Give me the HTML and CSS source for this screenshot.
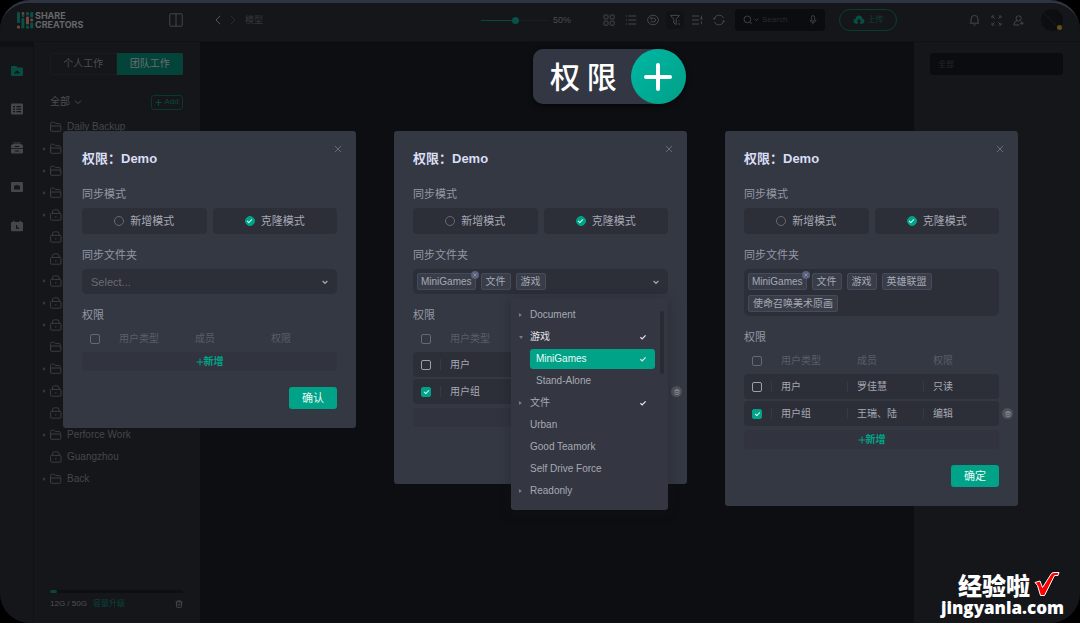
FILE: index.html
```html
<!DOCTYPE html>
<html lang="zh-CN">
<head>
<meta charset="utf-8">
<meta name="viewport" content="width=device-width, initial-scale=1">
<title>Share Creators</title>
<link rel="stylesheet" href="styles.css">
</head>
<body>
<svg class="sprite" aria-hidden="true">
  <symbol id="folder" viewBox="0 0 12 12"><path d="M.6 9.8V2.2q0-1 1-1h2.6l1.2 1.4h4q1 0 1 1v1M.6 5h10.2v4.3q0 1-1 1H1.6q-1 0-1-1z"/></symbol>
  <symbol id="lock" viewBox="0 0 12 12"><rect x=".6" y="4.4" width="10.4" height="6.8" rx="1"/><path d="M2.4 4.4V3Q2.4.8 4.6.8h2.4q2.2 0 2.2 2.2v1.4M5.8 7v1.6"/></symbol>
  <symbol id="close" viewBox="0 0 8 8"><path d="M.8.8l6.4 6.4M7.2.8L.8 7.2"/></symbol>
  <symbol id="down" viewBox="0 0 8 8"><path d="M1 2.6l3 3 3-3"/></symbol>
  <symbol id="caret" viewBox="0 0 8 8"><path stroke-width="1.3" d="M1.600 3l2.400 2.300L6.400 3"/></symbol>
  <symbol id="tick" viewBox="0 0 8 8"><path stroke-width="1.3" d="M1.400 4.200l1.800 1.700 3.400-3.500"/></symbol>
  <symbol id="trash" viewBox="0 0 10 10"><path d="M.8 2.4h8.4M3.2 2.2V1h3.6v1.2M1.8 2.6v5.4q0 1.2 1.2 1.2h4q1.2 0 1.2-1.2V2.6M4 4.6v2.4M6 4.6v2.4"/></symbol>
</svg>

<div class="app">
  <header class="topbar">
    <div class="brand">
      <div class="logo">
        <svg width="17" height="17" viewBox="0 0 17 17" aria-hidden="true">
          <g class="logo-green"><rect x="0" y="0" width="3" height="11" rx="1"/><rect x="4.4" y="6" width="3" height="10.5" rx="1"/><circle cx="6" cy="3.8" r="1.5"/><rect x="9" y="0" width="3" height="3.4" rx="1"/><rect x="9" y="13.4" width="3" height="3.4" rx="1"/><rect x="13.2" y="0" width="3" height="5.5" rx="1"/><rect x="13.2" y="10.5" width="3" height="6" rx="1"/></g>
          <g class="logo-red"><circle cx="1.5" cy="15" r="1.6"/><circle cx="6" cy="1.4" r="1.4"/><rect x="9" y="4.4" width="3" height="8.2" rx="1"/><circle cx="14.7" cy="8" r="1.6"/></g>
        </svg>
        <span class="logo-text">SHARE<br>CREATORS</span>
      </div>
      <button class="icon-btn" aria-label="布局"><svg width="14" height="14" viewBox="0 0 14 14"><rect x=".8" y=".8" width="12.4" height="12.4" rx="1.2"/><path d="M7 1v12"/></svg></button>
    </div>
    <nav class="crumbs" aria-label="路径">
      <button class="icon-btn" aria-label="后退"><svg width="6" height="10" viewBox="0 0 6 10"><path d="M5.2.8L1 5l4.2 4.2"/></svg></button>
      <button class="icon-btn faint" aria-label="前进"><svg width="6" height="10" viewBox="0 0 6 10"><path d="M.8.8L5 5 .8 9.2"/></svg></button>
      <span class="crumb">模型</span>
    </nav>
    <div class="tools">
      <label class="zoom"><input type="range" min="0" max="100" value="50" aria-label="缩放"><span>50%</span></label>
      <div class="tool-icons">
        <button class="icon-btn" aria-label="网格"><svg width="12" height="12" viewBox="0 0 12 12"><rect x="1" y="1" width="4" height="4" rx=".6"/><rect x="7.2" y="1" width="4" height="4" rx=".6"/><rect x="1" y="7.2" width="4" height="4" rx=".6"/><rect x="7.2" y="7.2" width="4" height="4" rx=".6"/></svg></button>
        <button class="icon-btn" aria-label="列表"><svg width="12" height="12" viewBox="0 0 12 12"><path d="M.8 2h1.2M.8 6h1.2M.8 10h1.2M3.4 2h8M3.4 6h8M3.4 10h8"/></svg></button>
        <button class="icon-btn" aria-label="撤销"><svg width="12" height="12" viewBox="0 0 12 12"><ellipse cx="6" cy="6" rx="5.4" ry="4.8"/><path d="M4.600 2.800L3.400 4.200l1.200 1.400M3.600 4.200h3.200q1.800 0 1.800 1.800T6.800 7.800H3.600"/></svg></button>
        <button class="icon-btn active" aria-label="筛选"><svg width="12" height="12" viewBox="0 0 12 12"><path d="M1.4 1.4h9L7.2 5.2v5.4L4.8 9V5.2zM10 6.4v1M10 9v2"/></svg></button>
        <button class="icon-btn" aria-label="排序"><svg width="12" height="12" viewBox="0 0 12 12"><path d="M1 2h7M1 6h7M1 10h7M10.4 1.6v3.8M9.6 4l.8 1.4.8-1.4M10.4 7.4v2.8"/></svg></button>
        <button class="icon-btn" aria-label="刷新"><svg width="12" height="12" viewBox="0 0 12 12"><path d="M1.2 5A5 5 0 0 1 10.6 4M10.8 7A5 5 0 0 1 1.4 8M.4 4l.8 1.4L2.6 4.4M11.6 8l-.8-1.4-1.4 1"/></svg></button>
      </div>
      <label class="search">
        <svg width="17" height="10" viewBox="0 0 17 10"><circle cx="4.4" cy="4.4" r="3.4"/><path d="M6.8 7l1.8 2M11.4 3.6l2 2 2-2"/></svg>
        <input type="text" placeholder="Search" aria-label="Search">
        <svg width="8" height="10" viewBox="0 0 8 10"><rect x="2.4" y=".6" width="3.2" height="5.2" rx="1.6"/><path d="M1 4.6q0 2.8 3 2.8t3-2.8M4 7.4v2"/></svg>
      </label>
      <button class="upload"><svg width="12" height="10" viewBox="0 0 12 10"><path d="M3 8.8Q.4 8.6.4 6.2.4 4 2.6 3.8 3.2.6 6 .6t3.4 3.2q2.2.2 2.2 2.4 0 2.4-2.6 2.6H7V6.4h1.4L6 3.8 3.6 6.4H5v2.4z"/></svg>上传</button>
    </div>
    <div class="account">
      <button class="icon-btn" aria-label="通知"><svg width="11" height="12" viewBox="0 0 11 12"><path d="M2 9V5Q2 1.4 5.5 1.4T9 5v4M.8 9.2h9.4M4.4 11h2.2"/></svg></button>
      <button class="icon-btn" aria-label="全屏"><svg width="11" height="11" viewBox="0 0 11 11"><path d="M1 3.2V1h2.2M7.8 1H10v2.2M10 7.8V10H7.8M3.2 10H1V7.8M2 2l1.6 1.6M9 2L7.4 3.6M9 9L7.4 7.4M2 9l1.6-1.6"/></svg></button>
      <button class="icon-btn" aria-label="用户"><svg width="11" height="11" viewBox="0 0 11 11"><circle cx="5.600" cy="3.4" r="2.6"/><path d="M4 5.6Q1 6.600.8 10h5.600M8.800 6.400v3.600M7 8.2h3.600"/></svg></button>
      <span class="avatar"><svg width="22" height="22" viewBox="0 0 22 22"><path d="M3 4l14 14"/></svg><i class="avatar-dot"></i></span>
    </div>
  </header>

  <div class="body">
    <nav class="rail" aria-label="主导航">
      <a href="#" class="current" aria-label="资源"><svg width="12" height="10" viewBox="0 0 12 10"><path fill-rule="evenodd" d="M1.2 0h4L6.6 1.4H11q1 0 1 1v6.4Q12 10 10.8 10H1.2Q0 10 0 8.8V1.2Q0 0 1.2 0zM3 7.4h5.6q.6-1.6-1-2-1-1.600-2.600-.4-.4 1-1.400 1z"/></svg></a>
      <a href="#" aria-label="列表"><svg width="12" height="12" viewBox="0 0 12 12"><path fill-rule="evenodd" d="M1 .5h10q1 0 1 1v9q0 1-1 1H1q-1 0-1-1v-9q0-1 1-1zM2 3v1.200h2V3zM5.400 3v1.200H10V3zM2 5.500v1.200h2V5.500zM5.400 5.500v1.200H10V5.500zM2 8v1.200h2V8zM5.400 8v1.200H10V8z"/></svg></a>
      <a href="#" aria-label="归档"><svg width="12" height="12" viewBox="0 0 12 12"><path fill-rule="evenodd" d="M2.400.4h7.200v1H2.400zM1.600 2h8.800L12 3.600v2.600H0V3.600zM4 4v1h4V4zM0 7h12v3.600q0 .8-.8.8H.8q-.8 0-.8-.8zM4 8.600v1h4v-1z"/></svg></a>
      <a href="#" aria-label="团队"><svg width="12" height="12" viewBox="0 0 12 12"><path fill-rule="evenodd" d="M1 1h10q1 0 1 1v8q0 1-1 1H1q-1 0-1-1V2q0-1 1-1zM3 8.400h6V5.800L7.800 4 7 4.800 6 3.400 5 4.800 4.200 4 3 5.800z"/></svg></a>
      <a href="#" aria-label="日程"><svg width="12" height="12" viewBox="0 0 12 12"><path fill-rule="evenodd" d="M2 .8h1.600V2h4.800V.8H10V2h1q1 0 1 1v7.200q0 1-1 1H1q-1 0-1-1V3q0-1 1-1h1zM5 5v3.800h3.200V7.600H6.200V5z"/></svg></a>
    </nav>

    <aside class="sidebar">
      <div class="tabs"><button>个人工作</button><button class="on">团队工作</button></div>
      <div class="side-head">
        <button class="filter">全部 <svg class="line" width="8" height="8"><use href="#down"/></svg></button>
        <button class="add"><svg class="line" width="7" height="7" viewBox="0 0 7 7"><path d="M3.500.4v6.200M.4 3.500h6.200"/></svg>Add</button>
      </div>
      <ul class="tree">
        <li><svg><use href="#folder"/></svg>Daily Backup</li>
        <li class="parent"><svg><use href="#folder"/></svg></li>
        <li class="parent"><svg><use href="#folder"/></svg></li>
        <li class="parent"><svg><use href="#folder"/></svg></li>
        <li class="parent"><svg><use href="#lock"/></svg></li>
        <li><svg><use href="#lock"/></svg></li>
        <li><svg><use href="#lock"/></svg></li>
        <li class="parent"><svg><use href="#lock"/></svg></li>
        <li class="parent"><svg><use href="#lock"/></svg></li>
        <li class="parent"><svg><use href="#lock"/></svg></li>
        <li><svg><use href="#folder"/></svg></li>
        <li class="parent"><svg><use href="#folder"/></svg></li>
        <li class="parent"><svg><use href="#lock"/></svg></li>
        <li><svg><use href="#lock"/></svg></li>
        <li class="parent"><svg><use href="#folder"/></svg>Perforce Work</li>
        <li><svg><use href="#lock"/></svg>Guangzhou</li>
        <li class="parent"><svg><use href="#folder"/></svg>Back</li>
      </ul>
      <div class="storage">
        <div class="bar"><div class="bar-fill"></div></div>
        <div class="storage-row"><span>12G / 50G</span><a href="#">容量升级</a><button class="icon-btn" aria-label="回收站"><svg width="8" height="8"><use href="#trash"/></svg></button></div>
      </div>
    </aside>

    <main class="stage"></main>

    <aside class="details"><input type="text" placeholder="全部" aria-label="全部"></aside>
  </div>

  <div class="badge"><span>权 限</span><i><svg width="28" height="28" viewBox="0 0 28 28"><path d="M14 2v24M2 14h24"/></svg></i></div>

  <div class="dialogs">
    <section class="dialog" role="dialog" aria-labelledby="t1">
      <button class="close" aria-label="关闭"><svg class="line" width="8" height="8"><use href="#close"/></svg></button>
      <h2 id="t1">权限：Demo</h2>
      <h3>同步模式</h3>
      <div class="modes">
        <label><input type="radio" name="m1">新增模式</label>
        <label><input type="radio" name="m1" checked>克隆模式</label>
      </div>
      <h3>同步文件夹</h3>
      <div class="field">
        <select aria-label="同步文件夹"><option>Select...</option></select>
        <svg class="line caret" width="8" height="8"><use href="#caret"/></svg>
      </div>
      <h3>权限</h3>
      <table class="empty">
        <thead><tr><th><input type="checkbox" aria-label="全选"></th><th>用户类型</th><th>成员</th><th>权限</th></tr></thead>
      </table>
      <button class="add-row"><svg class="line" width="8" height="8" viewBox="0 0 8 8"><path d="M4 .5v7M.5 4h7"/></svg>新增</button>
      <div class="actions"><button class="primary">确认</button></div>
    </section>

    <section class="dialog" role="dialog" aria-labelledby="t2">
      <button class="close" aria-label="关闭"><svg class="line" width="8" height="8"><use href="#close"/></svg></button>
      <h2 id="t2">权限：Demo</h2>
      <h3>同步模式</h3>
      <div class="modes">
        <label><input type="radio" name="m2">新增模式</label>
        <label><input type="radio" name="m2" checked>克隆模式</label>
      </div>
      <h3>同步文件夹</h3>
      <div class="field">
        <div class="chips">
          <span class="chip wide">MiniGames<button aria-label="移除"><svg class="line" width="4" height="4"><use href="#close"/></svg></button></span>
          <span class="chip">文件</span>
          <span class="chip">游戏</span>
        </div>
        <svg class="line caret" width="8" height="8"><use href="#caret"/></svg>
        <ul class="menu" role="listbox">
          <li class="closed">Document</li>
          <li class="open strong">游戏<svg class="line"><use href="#tick"/></svg></li>
          <li class="picked">MiniGames<svg class="line"><use href="#tick"/></svg></li>
          <li class="child">Stand-Alone</li>
          <li class="closed">文件<svg class="line"><use href="#tick"/></svg></li>
          <li>Urban</li>
          <li>Good Teamork</li>
          <li>Self Drive Force</li>
          <li class="closed">Readonly</li>
        </ul>
      </div>
      <h3>权限</h3>
      <table>
        <thead><tr><th><input type="checkbox" aria-label="全选"></th><th>用户类型</th><th></th><th></th></tr></thead>
        <tbody>
          <tr><td><input type="checkbox" aria-label="用户"></td><td>用户</td><td></td><td></td></tr>
          <tr><td><input type="checkbox" aria-label="用户组" checked></td><td>用户组</td><td></td><td><button class="remove" aria-label="删除"><svg class="line" width="6" height="6"><use href="#trash"/></svg></button></td></tr>
        </tbody>
      </table>
      <div class="add-row"></div>
      <div class="actions"></div>
    </section>

    <section class="dialog" role="dialog" aria-labelledby="t3">
      <button class="close" aria-label="关闭"><svg class="line" width="8" height="8"><use href="#close"/></svg></button>
      <h2 id="t3">权限：Demo</h2>
      <h3>同步模式</h3>
      <div class="modes">
        <label><input type="radio" name="m3">新增模式</label>
        <label><input type="radio" name="m3" checked>克隆模式</label>
      </div>
      <h3>同步文件夹</h3>
      <div class="field">
        <div class="chips">
          <span class="chip wide">MiniGames<button aria-label="移除"><svg class="line" width="4" height="4"><use href="#close"/></svg></button></span>
          <span class="chip">文件</span>
          <span class="chip">游戏</span>
          <span class="chip">英雄联盟</span>
          <span class="chip">使命召唤美术原画</span>
        </div>
      </div>
      <h3>权限</h3>
      <table>
        <thead><tr><th><input type="checkbox" aria-label="全选"></th><th>用户类型</th><th>成员</th><th>权限</th></tr></thead>
        <tbody>
          <tr><td><input type="checkbox" aria-label="用户"></td><td>用户</td><td>罗佳慧</td><td>只读</td></tr>
          <tr><td><input type="checkbox" aria-label="用户组" checked></td><td>用户组</td><td>王瑞、陆</td><td>编辑<button class="remove" aria-label="删除"><svg class="line" width="6" height="6"><use href="#trash"/></svg></button></td></tr>
        </tbody>
      </table>
      <button class="add-row"><svg class="line" width="8" height="8" viewBox="0 0 8 8"><path d="M4 .5v7M.5 4h7"/></svg>新增</button>
      <div class="actions"><button class="primary">确定</button></div>
    </section>
  </div>

  <div class="watermark">
    <div class="mark-top"><span>经验啦</span><svg width="27" height="27" viewBox="0 0 27 27"><path d="M2 11.500l5-1.500 2.500 6.500L17.500 4q1-2.500 3.500-2.500h5l-1 3h-3.500L11.500 24.500H7.500L4.500 14.500z"/></svg></div>
    <div class="mark-url">jingyanla.com</div>
  </div>
</div>
</body>
</html>
```

FILE: styles.css
```css
* { box-sizing: border-box; }

body {
  margin: 0;
  background: #000;
  color: #44464c;
  font: 10px/16px "Liberation Sans", "Noto Sans CJK SC", sans-serif;
}

button, input, select { font: inherit; color: inherit; margin: 0; }
button { padding: 0; border: 0; background: none; }
a { color: inherit; text-decoration: none; }
ul { margin: 0; padding: 0; list-style: none; }
svg { display: block; flex: none; fill: none; stroke: currentColor; }
.sprite { position: absolute; width: 0; height: 0; }
.line { fill: none; stroke: currentColor; }

.app {
  position: relative;
  min-height: 100vh;
  display: flex;
  flex-direction: column;
  border-top: 3px solid #2e3441;
  border-radius: 30px;
  background: #0d0e12;
  overflow: hidden;
}

/* top bar */
.topbar {
  display: flex;
  align-items: center;
  height: 39px;
  padding-bottom: 4px;
  background: #15161a;
  border-bottom: 1px solid #111216;
}
.brand {
  width: 200px;
  padding: 0 17px;
  display: flex;
  align-items: center;
  justify-content: space-between;
}
.logo { display: flex; align-items: center; gap: 1px; }
.logo svg { stroke: none; }
.logo-green { fill: #0b4f45; }
.logo-red { fill: #714640; }
.logo-text { font: bold 9px/9px Inter, sans-serif; color: #66676a; }
.icon-btn { display: flex; align-items: center; justify-content: center; }
.crumbs { flex: 1; display: flex; align-items: center; gap: 9px; padding-left: 15px; font-size: 9px; }
.crumbs .icon-btn { width: 6px; color: #55565a; }
.crumbs .faint { color: #2b2c30; }
.crumb { color: #36373c; }
.tools { display: flex; align-items: center; }
.zoom { display: flex; align-items: center; gap: 4px; width: 88px; font-size: 9px; color: #4b4c50; }
.zoom input {
  appearance: none;
  width: 68px;
  height: 7px;
  background: linear-gradient(90deg, #07493f 50%, #1c1e21 50%) center / 100% 1px no-repeat;
}
.zoom input::-webkit-slider-thumb { appearance: none; width: 7px; height: 7px; border-radius: 50%; background: #075145; }
.tool-icons { display: flex; gap: 4px; margin: 0 7px 0 31px; }
.tool-icons .icon-btn { width: 18px; height: 18px; border-radius: 4px; }
.tool-icons .active { background: #111216; }
.search {
  display: flex;
  align-items: center;
  gap: 2px;
  width: 90px;
  height: 22px;
  padding: 0 8px;
  border-radius: 3px;
  background: #0b0c10;
  color: #3e3f43;
}
.search input { flex: 1; min-width: 0; padding: 0; border: 0; outline: 0; background: none; font-size: 8px; }
.search input::placeholder { color: #2a2b2f; }
.upload {
  display: flex;
  align-items: center;
  justify-content: center;
  gap: 3px;
  width: 58px;
  height: 22px;
  margin-left: 14px;
  border: 1px solid #083d35;
  border-radius: 11px;
  color: #084339;
  font-size: 8px;
}
.upload svg { fill: #084f43; stroke: none; }
.account { display: flex; align-items: center; gap: 11px; margin-left: 72px; padding-right: 17px; }
.avatar { position: relative; margin-left: 6px; border-radius: 50%; background: #0d0e11; color: #18191c; }
.avatar-dot { position: absolute; right: 1px; bottom: 1px; width: 5px; height: 5px; border-radius: 50%; background: #665018; }

/* work area */
.body { flex: 1; display: flex; }
.rail {
  width: 34px;
  padding-top: 12px;
  display: flex;
  flex-direction: column;
  align-items: center;
  gap: 15px;
  background: #15161a;
  border-top: 5px solid #0f1013;
  border-right: 1px solid #101115;
  color: #45464a;
}
.rail a { display: flex; align-items: center; justify-content: center; width: 24px; height: 24px; }
.rail svg { fill: currentColor; stroke: none; }
.rail .current { height: 23px; color: #064d42; }
.sidebar {
  width: 166px;
  padding: 11px 17px 11px 16px;
  display: flex;
  flex-direction: column;
  background: #15161a;
}
.tabs { display: flex; height: 22px; border-radius: 2px; overflow: hidden; }
.tabs button { flex: 1; border: 1px solid #1a1b1e; color: #4c4d51; }
.tabs .on { border-color: #04433a; background: #04433a; color: #696e70; }
.side-head { display: flex; justify-content: space-between; align-items: center; margin: 19px 0 6px; height: 16px; }
.filter { display: flex; align-items: center; gap: 4px; color: #4d4e52; }
.add {
  display: flex;
  align-items: center;
  justify-content: center;
  gap: 2px;
  width: 32px;
  height: 15px;
  border: 1px solid #07382f;
  border-radius: 3px;
  color: #074a3e;
  font-size: 8px;
}
.tree li { position: relative; display: flex; align-items: center; gap: 5px; height: 22px; }
.tree svg { width: 12px; height: 12px; color: #3b3c41; }
.tree .parent::before {
  content: "";
  position: absolute;
  left: -7px;
  border: 2px solid transparent;
  border-left: 3px solid #35363b;
  border-right: 0;
}
.storage { margin-top: auto; }
.bar { height: 3px; margin-bottom: 3px; border-radius: 2px; background: #0e0f12; }
.bar-fill { width: 5%; height: 100%; border-radius: 2px; background: #06473c; }
.storage-row { display: flex; align-items: center; gap: 6px; font-size: 8px; color: #505155; }
.storage-row a { color: #06443a; }
.storage-row .icon-btn { margin-left: auto; }
.stage { flex: 1; }
.details { width: 166px; padding: 11px 17px 0 16px; background: #15161a; }
.details input {
  width: 100%;
  height: 22px;
  padding: 0 8px;
  border: 0;
  border-radius: 3px;
  outline: 0;
  background: #0b0c10;
  font-size: 8px;
}
.details input::placeholder { color: #25262a; }

/* floating heading */
.badge {
  position: absolute;
  top: 46px;
  left: calc(50% - 7px);
  display: flex;
  align-items: center;
  gap: 14px;
  height: 55px;
  padding-left: 17px;
  border-radius: 10px 28px 28px 10px;
  background: #333743;
  box-shadow: 0 2px 5px #0008;
  color: #fff;
  font: 500 30px/52px "Noto Sans CJK SC", sans-serif;
}
.badge span { height: 55px; }
.badge i {
  display: flex;
  align-items: center;
  justify-content: center;
  width: 55px;
  height: 55px;
  border-radius: 50%;
  background: linear-gradient(135deg, #00b7a5, #00a086);
}
.badge svg { stroke-width: 4; stroke-linecap: round; }

/* dialogs */
.dialogs {
  position: absolute;
  top: 128px;
  left: 0;
  right: 0;
  display: flex;
  align-items: flex-start;
  gap: 38px;
  padding: 0 62px 0 63px;
}
.dialog {
  position: relative;
  flex: 1;
  min-width: 0;
  padding: 18px 19px 19px;
  border-radius: 3px;
  background: #343843;
  color: #a6a9b3;
}
.close { position: absolute; top: 14px; right: 14px; color: #696c76; }
h2 { margin: 0 0 17px; font-size: 13px; line-height: 20px; color: #d9def5; }
h3 { margin: 13px 0 6px; font-size: 11px; line-height: 16px; font-weight: 400; color: #9598a3; }
.modes { display: flex; gap: 6px; }
.modes label {
  flex: 1;
  display: flex;
  align-items: center;
  justify-content: center;
  gap: 6px;
  height: 26px;
  border-radius: 4px;
  background: #2c2e38;
  font-size: 11px;
}
input[type="radio"], input[type="checkbox"] {
  appearance: none;
  display: grid;
  place-items: center;
  width: 10px;
  height: 10px;
  border: 1px solid #666974;
  border-radius: 50%;
}
input[type="checkbox"] { border-radius: 2px; }
tbody input[type="checkbox"] { border-color: #9da0aa; }
input[type="radio"]:checked, input[type="checkbox"]:checked { border-color: #00a388; background: #00a388; }
input:checked::after {
  content: "";
  width: 4px;
  height: 2px;
  margin-bottom: 1px;
  border: solid #d5f3ee;
  border-width: 0 0 1px 1px;
  transform: rotate(-45deg);
}
.field { position: relative; border-radius: 5px; background: #2c2e38; }
.field select {
  display: block;
  appearance: none;
  width: 100%;
  height: 25px;
  padding: 0 9px;
  border: 0;
  background: none;
  color: #696b76;
  font-size: 11px;
}
.caret { position: absolute; top: 9px; right: 8px; color: #a0a3ad; }
.chips { display: flex; flex-wrap: wrap; gap: 5px; padding: 4px; min-height: 25px; }
.chip {
  position: relative;
  height: 17px;
  padding: 0 4px;
  border: 1px solid #474b59;
  border-radius: 2px;
  background: #393d49;
  line-height: 15px;
}
.chip.wide { padding: 0 3px; }
.chip button {
  position: absolute;
  top: -3px;
  right: -4px;
  display: grid;
  place-items: center;
  width: 8px;
  height: 8px;
  border-radius: 50%;
  background: #5a6079;
  color: #b9bdcc;
}
.menu {
  position: absolute;
  z-index: 1;
  top: 29px;
  right: 0;
  width: 157px;
  padding: 7px 13px 9px 19px;
  display: grid;
  gap: 2px;
  border-radius: 3px;
  background: #343742;
  box-shadow: 0 2px 12px rgba(20, 22, 28, .35);
}
.menu::after {
  content: "";
  position: absolute;
  top: 13px;
  right: 4px;
  width: 4px;
  height: 63px;
  border-radius: 2px;
  background: #292b33;
}
.menu li { position: relative; display: flex; align-items: center; justify-content: space-between; height: 20px; padding-right: 8px; }
.menu li svg { width: 8px; height: 8px; color: #e1e3e9; }
.menu .closed::before, .menu .open::before {
  content: "";
  position: absolute;
  left: -11px;
  border: 2px solid transparent;
  border-left: 3px solid #777a85;
  border-right: 0;
}
.menu .open::before { border: 2px solid transparent; border-top: 3px solid #777a85; border-bottom: 0; }
.menu .strong { color: #e4e6ec; }
.menu .child { padding-left: 6px; }
.menu .picked { padding-left: 6px; border-radius: 3px; background: #00a388; color: #e9fbf8; }

table { width: 100%; margin: 1px 0 2px; table-layout: fixed; border-spacing: 0 2px; }
table.empty { margin-bottom: 0; }
h3:has(+ table) { margin-bottom: 0; }
th { height: 24px; padding: 1px 0 0 10px; text-align: left; font-weight: 400; color: #5b5d68; }
td { position: relative; height: 25px; padding: 0 0 0 10px; background: #2c2e38; }
th:first-child { width: 27px; padding-left: 8px; }
td:first-child { padding-left: 8px; border-radius: 4px 0 0 4px; }
td:last-child { border-radius: 0 4px 4px 0; }
td + td::before {
  content: "";
  position: absolute;
  left: 0;
  top: 7px;
  bottom: 7px;
  width: 1px;
  background: #373943;
}
.remove {
  position: absolute;
  top: 7px;
  right: -14px;
  display: grid;
  place-items: center;
  width: 11px;
  height: 11px;
  border-radius: 50%;
  background: #4f515b;
  color: #a3a5ad;
}
.add-row {
  display: flex;
  align-items: center;
  justify-content: center;
  width: 100%;
  height: 19px;
  border-radius: 4px;
  background: #31343f;
  color: #00a388;
  font-weight: 700;
}
.add-row svg { stroke-width: 1; }
.actions { display: flex; justify-content: flex-end; min-height: 22px; margin-top: 16px; }
.primary { width: 48px; height: 22px; border-radius: 3px; background: #00a388; color: #eafaf7; font-size: 11px; }

/* corner mark */
.watermark { position: absolute; right: 16px; bottom: 6px; color: #fff; }
.mark-top { display: flex; align-items: center; justify-content: flex-end; gap: 3px; padding-right: 4px; height: 29px; }
.mark-top span { font: 900 24px/24px "Noto Sans CJK SC", sans-serif; }
.mark-top svg { fill: #f00; stroke: #fff; stroke-width: 1; }
.mark-url { font: 800 17px/18px "Open Sans", sans-serif; text-align: right; }
```
